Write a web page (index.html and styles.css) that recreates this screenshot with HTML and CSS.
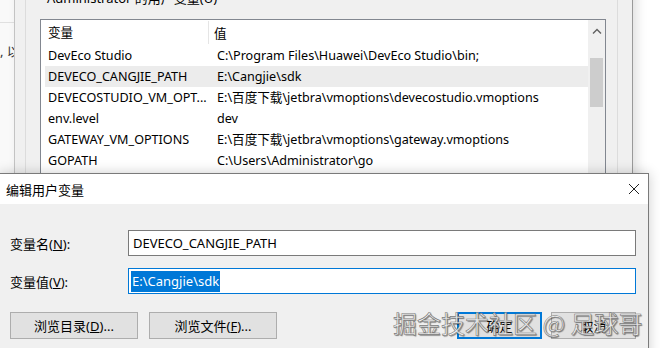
FILE: index.html
```html
<!DOCTYPE html>
<html lang="zh-CN">
<head>
  <meta charset="UTF-8">
  <title>编辑用户变量</title>
  <link rel="stylesheet" href="styles.css">
</head>
<body>

  <!-- window far behind, left edge -->
  <div class="side-win">
    <div class="side-line"></div>
    <div class="side-text">, 以</div>
  </div>

  <!-- environment variables window -->
  <div class="env-win">
    <div class="group">
      <div class="group-label">Administrator 的用户变量(U)</div>
      <div class="list">
        <div class="list-main">
          <div class="list-head">
            <div class="col-a">变量</div>
            <div class="col-b">值</div>
          </div>
          <div class="row"><div class="col-a">DevEco Studio</div><div class="col-b">C:\Program Files\Huawei\DevEco Studio\bin;</div></div>
          <div class="row selected"><div class="col-a">DEVECO_CANGJIE_PATH</div><div class="col-b">E:\Cangjie\sdk</div></div>
          <div class="row"><div class="col-a">DEVECOSTUDIO_VM_OPT...</div><div class="col-b">E:\百度下载\jetbra\vmoptions\devecostudio.vmoptions</div></div>
          <div class="row"><div class="col-a">env.level</div><div class="col-b">dev</div></div>
          <div class="row"><div class="col-a">GATEWAY_VM_OPTIONS</div><div class="col-b">E:\百度下载\jetbra\vmoptions\gateway.vmoptions</div></div>
          <div class="row"><div class="col-a">GOPATH</div><div class="col-b">C:\Users\Administrator\go</div></div>
        </div>
        <div class="scrollbar">
          <svg class="arrow" width="10" height="6" viewBox="0 0 10 6"><path d="M1 5.5 L5 1.5 L9 5.5" fill="none" stroke="#606060" stroke-width="1.4"/></svg>
          <div class="thumb"></div>
        </div>
      </div>
    </div>
  </div>

  <!-- edit dialog -->
  <div class="dialog">
    <div class="title-bar">
      <span class="title">编辑用户变量</span>
      <svg class="close" width="12" height="12" viewBox="0 0 12 12"><path d="M1 1 L11 11 M11 1 L1 11" stroke="#222" stroke-width="1"/></svg>
    </div>
    <div class="dialog-body">
      <div class="field">
        <label>变量名(<u>N</u>):</label>
        <div class="input">DEVECO_CANGJIE_PATH</div>
      </div>
      <div class="field">
        <label>变量值(<u>V</u>):</label>
        <div class="input focused"><span class="sel">E:\Cangjie\sdk</span></div>
      </div>
      <div class="buttons">
        <button class="btn wide">浏览目录(<u>D</u>)...</button>
        <button class="btn wide">浏览文件(<u>F</u>)...</button>
        <span class="spacer"></span>
        <button class="btn ok">确定</button>
        <button class="btn">取消</button>
      </div>
    </div>
  </div>

  <div class="watermark">掘金技术社区 @ 足球哥</div>

</body>
</html>
```

FILE: styles.css
```css
/* base */
html, body {
  margin: 0; padding: 0;
  width: 660px; height: 348px;
  overflow: hidden;
  background: #fff;
  font-family: 'Noto Sans', 'Noto Sans CJK SC', sans-serif;
  font-size: 13px;
  color: #000;
  position: relative;
}

/* left window */
.side-win {
  position: absolute; left: 0; top: 0;
  width: 14px; height: 180px;
  background: #f9f9f9;
  border-right: 1px solid #c8c8c8;
  overflow: hidden;
}
.side-line { margin-top: 22px; height: 1px; background: #e0e0e0; }
.side-text { margin-top: 18px; white-space: nowrap; color: #333; font-size: 13px; }

/* env window */
.env-win {
  position: absolute; left: 15px; top: -12px;
  width: 617px; height: 200px;
  background: #f0f0f0;
  border-right: 1px solid #9a9a9a;
  box-shadow: 4px 0 10px rgba(0,0,0,0.12);
}
.group {
  margin: 0 14px 0 10px;
  padding: 0 11px 0 14px;
  border: 1px solid #dcdcdc;
  border-top: none;
  height: 100%;
  box-sizing: border-box;
}
.group-label {
  height: 31px; line-height: 20px;
  margin-left: 7px;
  color: #000;
}
.list {
  display: flex;
  border: 1px solid #828790;
  background: #fff;
  height: 180px;
  font-size: 12.6px;
}
.list-main { flex: 1; }
.list-head, .row { display: flex; white-space: nowrap; }
.list-head { height: 25px; align-items: center; }
.list-head .col-a { border-right: 1px solid #e5e5e5; height: 23px; line-height: 23px; }
.row { height: 21px; line-height: 21px; margin-left: 4px; }
.row .col-a { width: 164px; }
.list-head .col-a { width: 160px; padding-left: 7px; }
.col-a { padding-left: 3px; }
.col-b { padding-left: 5px; }
.row.selected { background: #ececec; }
.scrollbar {
  width: 17px;
  background: #f0f0f0;
  display: flex; flex-direction: column; align-items: center;
}
.arrow { margin-top: 8px; }
.thumb {
  margin-top: 24px;
  width: 13px; height: 49px;
  background: #cdcdcd;
}

/* dialog */
.dialog {
  position: absolute; left: -1px; top: 173px;
  width: 648px; height: 190px;
  background: #f0f0f0;
  border: 1px solid #7a7a7a;
  box-shadow: 0 0 12px rgba(0,0,0,0.2);
}
.title-bar {
  height: 30px; background: #fff;
  display: flex; align-items: center;
  padding: 0 8px 0 6px;
}
.title { flex: 1; }
.dialog-body { padding: 26px 12px 0 10px; }
.field { display: flex; align-items: center; margin-bottom: 12px; }
.field label { width: 118px; }
.field u, .btn u { text-decoration: underline; }
.input {
  flex: 1;
  height: 24px; line-height: 24px;
  border: 1px solid #7a7a7a;
  background: #fff;
  padding: 0 4px;
  white-space: nowrap;
}
.input.focused { border-color: #0078d7; padding-left: 2px; }
.sel {
  display: inline-block;
  background: #0078d7; color: #fff;
  line-height: 21px;
  padding: 0 1px;
}
.buttons { display: flex; gap: 11px; margin-top: 18px; }
.spacer { flex: 1; }
.btn {
  font: inherit;
  height: 27px; width: 85px;
  background: #e1e1e1;
  border: 1px solid #adadad;
  padding: 0;
}
.btn.wide { width: 128px; }
.btn.ok { border: 2px solid #0078d7; margin-right: -2px; }

/* watermark */
.watermark {
  position: absolute; left: 393px; top: 306px;
  font-family: 'Noto Sans CJK SC', sans-serif;
  font-size: 24px;
  line-height: 34px;
  white-space: nowrap;
  color: rgba(255,255,255,0.8);
  -webkit-text-stroke: 0.6px #777;
  text-shadow: 1px 1px 1px rgba(0,0,0,0.45);
}
```
